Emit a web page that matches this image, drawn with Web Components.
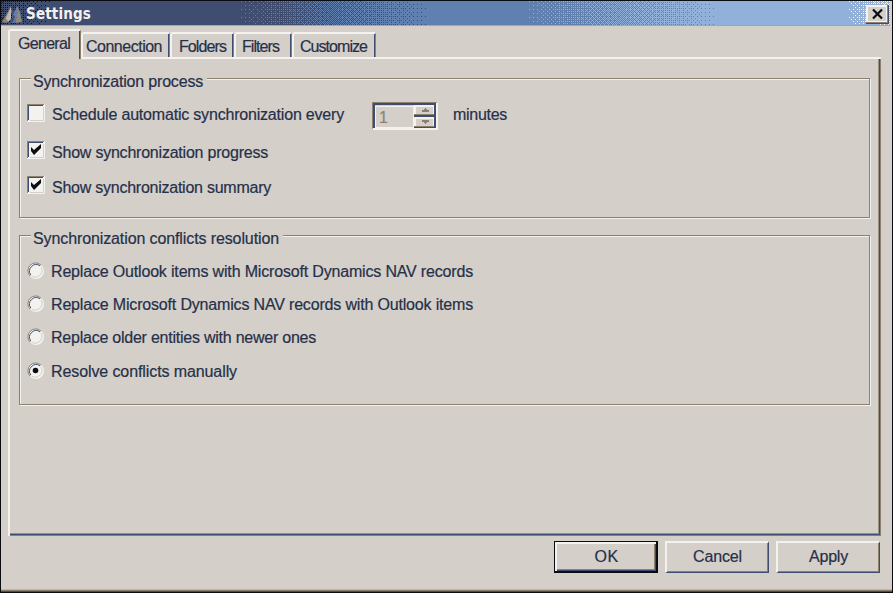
<!DOCTYPE html>
<html lang="en"><head><meta charset="utf-8"><title>Settings</title>
<style>
html,body{margin:0;padding:0;background:#d4cfc8;overflow:hidden}
body{width:893px;height:593px;font:16px/18px "Liberation Sans",Arial,sans-serif;color:#26304a;-webkit-text-stroke:.2px}
</style></head><body>
<settings-window>
  <title-bar slot="title"><fit-text w="65">Settings</fit-text></title-bar>
  <tab-strip slot="tabs">
    <tab-item active style="width:73px"><fit-text w="52">General</fit-text></tab-item>
    <tab-item style="width:89px;--pad:3px"><fit-text w="76">Connection</fit-text></tab-item>
    <tab-item style="width:64px;--pad:7px"><fit-text w="47">Folders</fit-text></tab-item>
    <tab-item style="width:58px;--pad:6px"><fit-text w="37">Filters</fit-text></tab-item>
    <tab-item style="width:84px;--pad:6px"><fit-text w="67">Customize</fit-text></tab-item>
  </tab-strip>
  <group-box style="height:140px;--rows:38px 35px 35px;--top:25px">
    <fit-text slot="legend" w="170">Synchronization process</fit-text>
    <check-option><fit-text w="292">Schedule automatic synchronization every</fit-text><number-spinner slot="after">1</number-spinner><fit-text slot="after" w="54">minutes</fit-text></check-option>
    <check-option checked><fit-text w="216">Show synchronization progress</fit-text></check-option>
    <check-option checked><fit-text w="219">Show synchronization summary</fit-text></check-option>
  </group-box>
  <group-box style="height:170px;margin-top:17px;--rows:33px 33px 34px 33px;--top:19px">
    <fit-text slot="legend" w="246">Synchronization conflicts resolution</fit-text>
    <radio-option><fit-text w="422">Replace Outlook items with Microsoft Dynamics NAV records</fit-text></radio-option>
    <radio-option><fit-text w="422">Replace Microsoft Dynamics NAV records with Outlook items</fit-text></radio-option>
    <radio-option><fit-text w="265">Replace older entities with newer ones</fit-text></radio-option>
    <radio-option checked><fit-text w="186">Resolve conflicts manually</fit-text></radio-option>
  </group-box>
  <push-button slot="actions" primary><fit-text w="24">OK</fit-text></push-button>
  <push-button slot="actions"><fit-text w="49">Cancel</fit-text></push-button>
  <push-button slot="actions"><fit-text w="39">Apply</fit-text></push-button>
</settings-window>
<script>
function define(name, html, connected){
  customElements.define(name, class extends HTMLElement{
    constructor(){ super(); this.attachShadow({mode:'open'}).innerHTML = html; }
    connectedCallback(){ if(connected) connected.call(this); }
  });
}
define('settings-window', `<style>
:host{display:flex;flex-direction:column;box-sizing:border-box;width:893px;height:593px;border:1px solid #0b0b12;background:#d4cfc8;box-shadow:inset 0 -1px #3f4d70,inset 0 -2px #8c8171,inset 0 -3px #bcb7ad}
.page{margin:0 0 0 7px;box-sizing:border-box;width:873px;height:479px;border:2px solid #f3f2ee;border-right:0;border-bottom:0;box-shadow:inset -1px -1px #8c8171,inset -2px -2px #3f4d70,inset -3px -3px #9b9183;padding:19px 0 0 9px}
footer{display:flex;gap:7px;padding:5px 0 0 553px}
</style><slot name="title"></slot><slot name="tabs"></slot><div class="page"><slot></slot></div><footer><slot name="actions"></slot></footer>`);
define('title-bar', `<style>
:host{display:grid;grid-template:25px/889px;font:bold 15px/24px "DejaVu Sans Condensed","DejaVu Sans",sans-serif;color:#f3f2ee;-webkit-text-stroke:0}
:host>*{grid-area:1/1}.tex{display:block}
.row{display:flex;align-items:center;padding:1px 0 0 1px;z-index:1}
.name{margin:-1px auto 0 4px}.logo{display:block}
.close{display:block;width:23px;height:19px;margin-right:1px}
</style>
<svg class="tex" width="889" height="25" shape-rendering="crispEdges"></svg>
<div class="row">
<svg class="logo" width="20" height="20" viewBox="0 0 20 20"><path d="M0 18 9 2l1 6-5 11z" fill="#8b8173"/><path d="M4 14 9 3v12l-3 3z" fill="#c0b9af"/><path d="m11 13 4-11 3 6 2 10-7 1 2-8z" fill="#92867a"/><path d="m9 18 2-8 4-6 1 5-3 9-2 1z" fill="#6080b0"/><path d="m9 18 2-7 2 1-2 6z" fill="#3f4d70"/></svg>
<div class="name"><slot></slot></div>
<svg class="close" viewBox="0 0 23 19" shape-rendering="crispEdges"><path d="M0 0h23v19H0z" fill="#3f4d70"/><path d="M0 0h22v18H0z" fill="#8c8171"/><path d="M0 0h21v17H0z" fill="#f3f2ee"/><path d="M2 2h18v14H2z" fill="#d4cfc8"/><path d="m7 4.500 9 9m0-9-9 9" stroke="#0b0b12" stroke-width="2.200" fill="none" shape-rendering="auto"/></svg>
</div>`, function(){
  // Ordered dithering between the four palette colours of the caption gradient.
  const B=[0,32,8,40,2,34,10,42,48,16,56,24,50,18,58,26,12,44,4,36,14,46,6,38,60,28,52,20,62,30,54,22,3,35,11,43,1,33,9,41,51,19,59,27,49,17,57,25,15,47,7,39,13,45,5,37,63,31,55,23,61,29,53,21];
  const C=['#3f4d70','#6080b0','#92b1da','#f3f2ee'], P=['','','',''];
  const level=x=>x<236?0:x<428?(x-236)/192:x<522?1:x<718?1+(x-522)/196:x<842?2:2+(x-842)/110;
  for(let y=0;y<25;y++){ let start=0, last=-1;
    for(let x=0;x<=889;x++){
      const v=level(x), b=Math.floor(v);
      const k=x===889?-1:Math.min(3,b+((v-b)*64>B[(y%8)*8+x%8]+.5?1:0));
      if(k!==last){ if(last>0) P[last]+='M'+start+' '+y+'h'+(x-start)+'v1H'+start+'z'; start=x; last=k; }
    }
  }
  let speck='';
  for(let y=0;y<24;y++)for(let x=0;x<60;x++) if(B[(y%8)*8+x%8] < 17-x/3.2) speck+='M'+x+' '+y+'h1v1h-1z';
  this.shadowRoot.querySelector('.tex').innerHTML='<path fill="'+C[0]+'" d="M0 0h889v25H0z"/>'+P.map((d,i)=>d?'<path fill="'+C[i]+'" d="'+d+'"/>':'').join('')+'<path fill="#10131f" d="'+speck+'"/><path fill="#8fa9cc" d="M0 24h889v1H0z"/>';
});
define('tab-strip', `<style>:host{display:flex;align-items:flex-end;height:31px;padding-left:7px}</style><slot></slot>`);
define('tab-item', `<style>
:host{display:block;box-sizing:border-box;height:25px;padding:4px 0 0 var(--pad,8px);border-top:2px solid #f3f2ee;border-left:2px solid #f3f2ee;border-right:1px solid #8c8171;border-radius:3px 2px 0 0;box-shadow:inset -1px 0 #3f4d70}
:host([active]){height:30px;margin-bottom:-2px;padding:4px 0 0 8px;background:#d4cfc8;z-index:1;position:relative}
</style><slot></slot>`);
define('group-box', `<style>
:host{display:grid;grid-template:100%/100%;width:851px}
.frame,.body,.legend{grid-area:1/1}
.frame{border:1px solid #8c8171;box-shadow:1px 1px #f3f2ee,inset 1px 1px #f3f2ee}
.legend{justify-self:start;align-self:start;background:#d4cfc8;padding:0 4px 0 2px;margin:-5px 0 0 12px}
.body{display:grid;align-content:start;grid-template-rows:var(--rows);padding:var(--top) 0 0 8px}
</style><div class="frame"></div><div class="legend"><slot name="legend"></slot></div><div class="body"><slot></slot></div>`);
define('check-option', `<style>
:host{display:flex;align-items:flex-start;height:28px}
svg{display:block;flex:none;margin:1px 7px 0 0}path.tick{display:none}:host([checked]) path.tick{display:block}:host([checked]) svg{margin-top:0}
.label{padding-top:3px}.after{display:flex;gap:15px;margin-left:28px}.after ::slotted(fit-text){padding-top:3px}
</style><svg width="18" height="18" shape-rendering="crispEdges"><path fill="#f3f2ee" d="M0 0h18v18H0z"/><path fill="#8c8171" d="M0 0h17v1H1v16H0z"/><path fill="#3f4d70" d="M1 1h15v1H2v14H1z"/><path fill="#d4cfc8" d="M3 16h13V3h1v14H3z"/><path class="tick" shape-rendering="auto" fill="#0b0b12" d="m4 6 3 3 7-6v4l-7 7-3-4z"/></svg><div class="label"><slot></slot></div><div class="after"><slot name="after"></slot></div>`);
define('number-spinner', `<style>
:host{display:grid;grid-template-columns:1fr 22px;box-sizing:border-box;width:66px;height:28px;margin-top:-1px;border:solid;border-width:1px 2px 2px 1px;border-color:#8c8171 #f3f2ee #f3f2ee #8c8171;color:#8c8171;box-shadow:inset 2px 2px #3f4d70}
.v{padding:3px 0 0 3px;margin:3px 0 0 2px;border:1px solid #f3f2ee;line-height:16px}
svg{display:block}</style><div class="v"><slot></slot></div><svg width="22" height="25" shape-rendering="crispEdges"><path fill="#3f4d70" d="M0 1h22v24H0z"/><path fill="#f3f2ee" d="M0 2h20v10H0zM0 14h20v9H0z"/><path fill="#d4cfc8" d="M2 4h17v7H2zM2 16h17v7H2z"/><path fill="#8c8171" d="M0 11h20v1H0zM0 23h20v1H0zM11 5h1v1h1v1h2v2H8V7h2V6h1zM8 17h7v2h-2v1h-1v1h-1v-1h-1v-1H8z"/></svg>`);
define('radio-option', `<style>
:host{display:flex;align-items:flex-start;height:28px}
svg{display:block;flex:none;margin:8px 6px 0 0}circle.dot{display:none}:host([checked]) circle.dot{display:block}.label{padding-top:9px}
</style><svg width="18" height="18" fill="none"><circle cx="9" cy="9" r="8" fill="#f3f2ee"/><path d="M3.2 14.2A7.5 7.5 0 0 1 14.2 3.2" stroke="#8c8171"/><path d="M3.8 13A6.6 6.6 0 0 1 13 3.8" stroke="#3f4d70"/><path d="M14 4.800A6.800 6.800 0 0 1 4.800 14.200" stroke="#d4cfc8"/><circle class="dot" cx="8.500" cy="8.500" r="2.800" fill="#0b0b12"/></svg><div class="label"><slot></slot></div>`);
define('push-button', `<style>
:host{display:flex;justify-content:center;box-sizing:border-box;width:104px;height:32px;padding:5px 0 0;border:solid;border-width:2px 1px 1px 2px;border-color:#f3f2ee #3f4d70 #3f4d70 #f3f2ee;box-shadow:inset -1px -1px #8c8171}
:host([primary]){border-color:#0b0b12;border-width:1px 2px 2px 1px;box-shadow:inset 2px 2px #f3f2ee,inset -1px -1px #3f4d70,inset -2px -2px #8c8171;padding:6px 0 0 2px}
</style><slot></slot>`);
// Text run whose letter spacing is tuned to a fixed advance width; defined last so inherited fonts are in place.
define('fit-text', `<style>:host{display:block;white-space:nowrap;flex:none}span{display:inline-block}</style><span><slot></slot></span>`, function(){
  const s=this.shadowRoot.querySelector('span'), n=this.textContent.length;
  s.style.letterSpacing=((+this.getAttribute('w')-s.getBoundingClientRect().width)/n)+'px';
});
</script></body></html>
